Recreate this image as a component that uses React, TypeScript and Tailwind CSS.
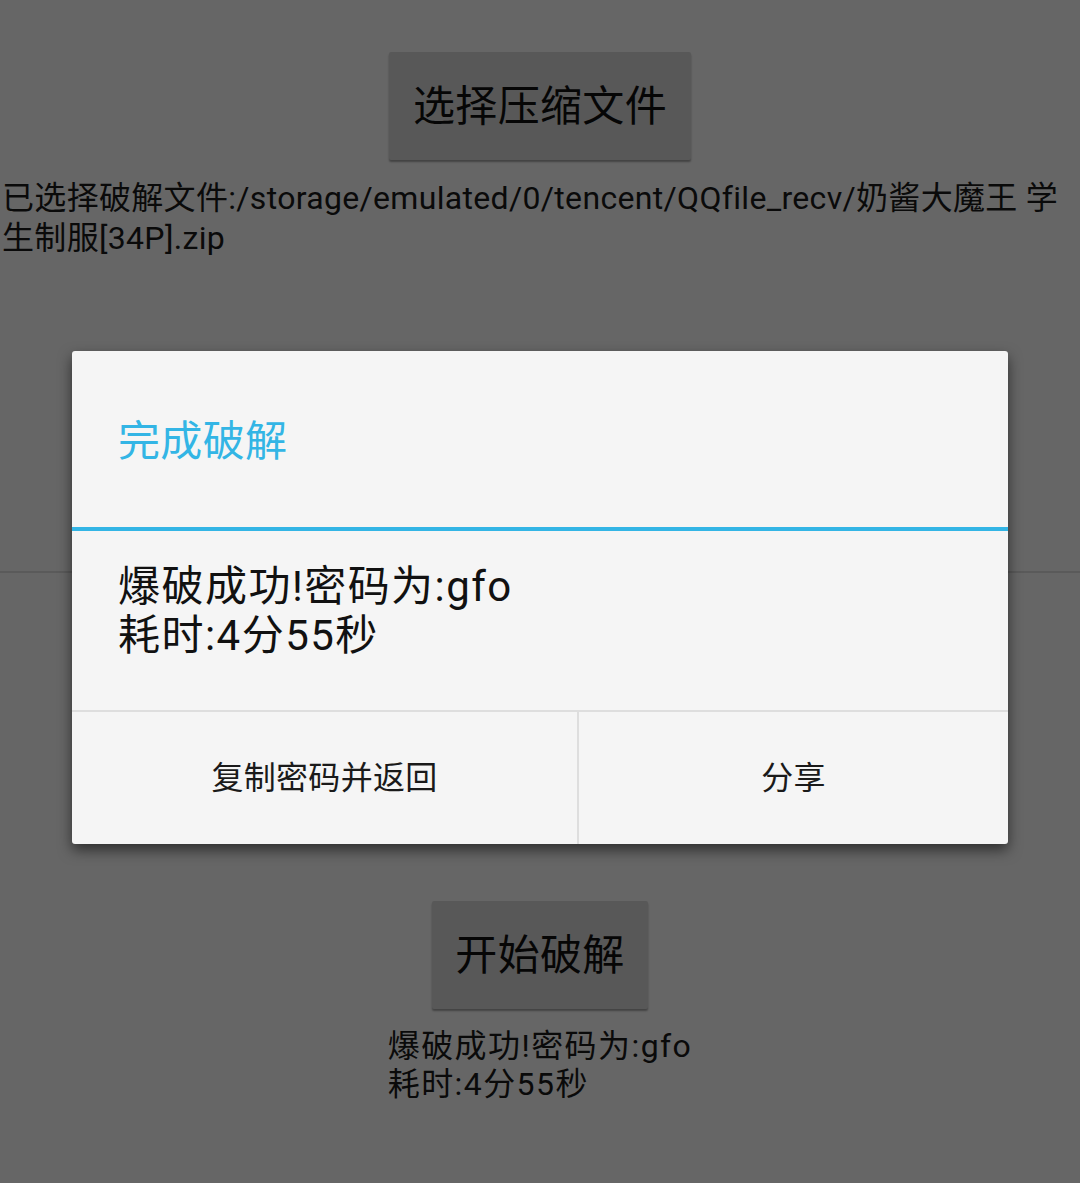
import React from 'react';

const font = "font-['Roboto','Noto_Sans_CJK_SC',sans-serif] tracking-[0.02em]";

const HoloButton: React.FC<{ label: string; width: string }> = ({ label, width }) => (
  <button
    className={`${width} h-[108px] bg-[#dcdcdc] rounded-[2px] shadow-[0_2px_2px_rgba(0,0,0,0.35)] text-[42px] text-[#111] flex items-center justify-center`}
  >
    {label}
  </button>
);

const App: React.FC = () => {
  return (
    <div className={`relative w-[1080px] h-[1183px] bg-white overflow-hidden ${font}`}>
      {/* activity content */}
      <div className="flex flex-col items-center pt-[52px]">
        <HoloButton label="选择压缩文件" width="w-[302px]" />
        <p className="self-stretch mt-[18px] pl-[2px] pr-0 text-[32px] leading-[40px] text-[#1a1a1a]">
          已选择破解文件:/storage/emulated/0/tencent/QQfile_recv/奶酱大魔王 学生制服[34P].zip
        </p>
        <div className="self-stretch h-[2px] mt-[313px] bg-[#e2e2e2]" />
        <div className="mt-[328px]">
          <HoloButton label="开始破解" width="w-[216px]" />
        </div>
        <div className="mt-[18px] text-[32px] leading-[38px] tracking-[0.045em] text-[#1a1a1a] text-left">
          <div>爆破成功!密码为:gfo</div>
          <div>耗时:4分55秒</div>
        </div>
      </div>

      {/* dim layer behind the dialog */}
      <div className="absolute inset-0 bg-black/60" />

      {/* result dialog */}
      <div className="absolute left-[72px] top-[351px] w-[936px] bg-[#f5f5f5] rounded-[3px] shadow-[0_6px_14px_rgba(0,0,0,0.55)] overflow-hidden">
        <div className="h-[176px] flex items-center pl-[46px] pt-[4px] text-[42px] text-[#33b5e5]">
          完成破解
        </div>
        <div className="h-[4px] bg-[#33b5e5]" />
        <div className="h-[179px] pl-[46px] pt-[31px] text-[42px] leading-[49px] tracking-[0.035em] text-[#111]">
          <div>爆破成功!密码为:gfo</div>
          <div>耗时:4分55秒</div>
        </div>
        <div className="h-[2px] bg-[#dedede]" />
        <div className="flex h-[132px]">
          <button className="w-[505px] flex items-center justify-center text-[32px] text-[#1a1a1a]">
            复制密码并返回
          </button>
          <div className="w-[2px] bg-[#dedede]" />
          <button className="flex-1 flex items-center justify-center text-[32px] text-[#1a1a1a]">
            分享
          </button>
        </div>
      </div>
    </div>
  );
};

export default App;
